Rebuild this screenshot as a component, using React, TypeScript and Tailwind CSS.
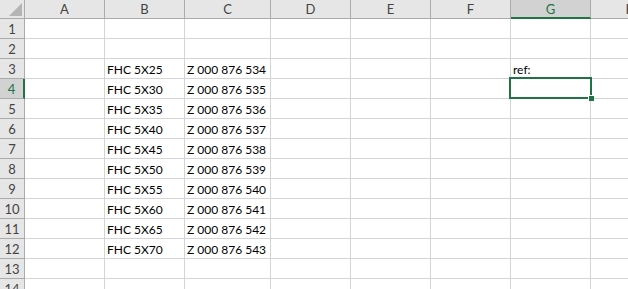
import React from "react";

const cols = [
  { k: "A", w: "w-[80px]" },
  { k: "B", w: "w-[80px]" },
  { k: "C", w: "w-[86px]" },
  { k: "D", w: "w-[80px]" },
  { k: "E", w: "w-[80px]" },
  { k: "F", w: "w-[80px]" },
  { k: "G", w: "w-[80px]" },
  { k: "H", w: "w-[80px]" },
];

const data: Record<number, { B?: string; C?: string; G?: string }> = {
  3: { B: "FHC 5X25", C: "Z 000 876 534", G: "ref:" },
  4: { B: "FHC 5X30", C: "Z 000 876 535" },
  5: { B: "FHC 5X35", C: "Z 000 876 536" },
  6: { B: "FHC 5X40", C: "Z 000 876 537" },
  7: { B: "FHC 5X45", C: "Z 000 876 538" },
  8: { B: "FHC 5X50", C: "Z 000 876 539" },
  9: { B: "FHC 5X55", C: "Z 000 876 540" },
  10: { B: "FHC 5X60", C: "Z 000 876 541" },
  11: { B: "FHC 5X65", C: "Z 000 876 542" },
  12: { B: "FHC 5X70", C: "Z 000 876 543" },
};

export default function App() {
  const rows = Array.from({ length: 14 }, (_, i) => i + 1);
  return (
    <div
      className="w-[628px] h-[289px] overflow-hidden bg-white text-black"
      style={{ fontFamily: "Lato, 'Liberation Sans', sans-serif" }}
    >
      {/* header row */}
      <div className="flex h-[19px] bg-[#e6e6e6]">
        <div className="w-[25px] shrink-0 h-[19px] border-r border-b border-[#ababab] relative">
          <svg className="absolute left-[9px] top-[3px]" width="13" height="13" viewBox="0 0 13 13">
            <polygon points="13,0 13,13 0,13" fill="#b4b4b4" />
          </svg>
        </div>
        {cols.map((c) => (
          <div
            key={c.k}
            className={`${c.w} shrink-0 h-[19px] flex items-center justify-center text-[13px] leading-none pt-[1px] ${
              c.k === "G"
                ? "bg-[#d2d2d2] border-b-2 border-b-[#217346] border-r border-r-[#ababab] text-[#217346]"
                : "border-r border-b border-[#ababab] text-[#444444]"
            }`}
          >
            {c.k}
          </div>
        ))}
      </div>
      {rows.map((r) => (
        <div key={r} className="flex h-[20px]">
          <div
            className={`w-[25px] shrink-0 h-[20px] flex items-center justify-center text-[13px] leading-none pt-[1px] border-b border-[#ababab] ${
              r === 4
                ? "bg-[#d2d2d2] border-r-2 border-r-[#217346] text-[#217346]"
                : "bg-[#e6e6e6] border-r border-r-[#ababab] text-[#444444]"
            }`}
          >
            {r}
          </div>
          {cols.map((c) => {
            const v = (data[r] as any)?.[c.k] as string | undefined;
            return (
              <div
                key={c.k}
                className={`${c.w} shrink-0 h-[20px] border-r border-b border-[#d4d4d4] relative flex items-end pl-[2px] pb-[2px] text-[12px] leading-none whitespace-nowrap`}
              >
                {v}
                {r === 4 && c.k === "G" && (
                  <>
                    <div className="absolute z-10 left-[-2px] top-[-2px] w-[83px] h-[22px] border-2 border-[#217346]" />
                    <div className="absolute z-20 left-[77px] top-[16px] w-[6px] h-[6px] bg-[#217346] border-l border-t border-white" />
                  </>
                )}
              </div>
            );
          })}
        </div>
      ))}
    </div>
  );
}
